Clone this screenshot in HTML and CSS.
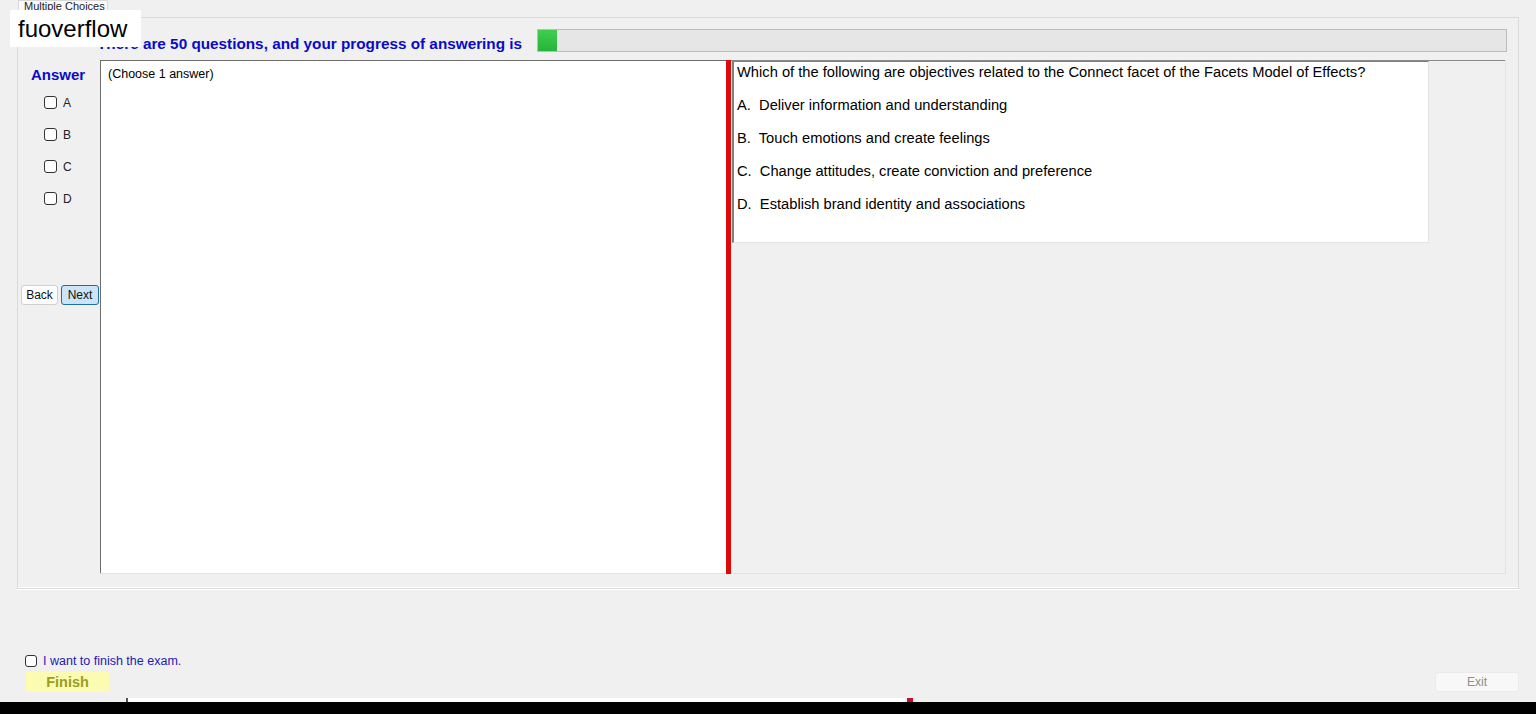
FILE: index.html
```html
<!DOCTYPE html>
<html lang="en">
	<head>
		<title>Multiple Choices</title>
		<link rel="stylesheet" href="styles.css">
	</head>
	<body>
		<div class="watermark">fuoverflow</div>

		<div class="tabs">
			<span class="tab">Multiple Choices</span>
		</div>

		<div class="page">
			<div class="head">
				<div class="title">There are 50 questions, and your progress of answering is</div>
				<div class="progress"><div class="progress_fill" style="width:19px"></div></div>
			</div>

			<div class="main">
				<div class="side">
					<div class="answer_label">Answer</div>
					<div class="opts">
						<label class="opt"><span class="box"></span>A</label>
						<label class="opt"><span class="box"></span>B</label>
						<label class="opt"><span class="box"></span>C</label>
						<label class="opt"><span class="box"></span>D</label>
					</div>
					<div class="nav">
						<button class="btn">Back</button>
						<button class="btn next">Next</button>
					</div>
				</div>

				<div class="split">
					<div class="pane_left">(Choose 1 answer)</div>
					<div class="splitter"></div>
					<div class="pane_right">
						<div class="question">
							<p>Which of the following are objectives related to the Connect facet of the Facets Model of Effects?</p>
							<p>A.  Deliver information and understanding</p>
							<p>B.  Touch emotions and create feelings</p>
							<p>C.  Change attitudes, create conviction and preference</p>
							<p>D.  Establish brand identity and associations</p>
						</div>
					</div>
				</div>
			</div>
		</div>

		<div class="footer">
			<label class="finish_check"><span class="box"></span>I want to finish the exam.</label>
			<div class="footer_btns">
				<button class="finish">Finish</button>
				<button class="exit">Exit</button>
			</div>
		</div>

		<div class="edge">
			<span class="edge_white"></span>
			<span class="edge_red"></span>
		</div>
		<div class="blackbar"></div>
	</body>
</html>
```

FILE: styles.css
```css
*{margin:0px;padding:0px;box-sizing:border-box;}
body{width:1536px;height:714px;overflow:hidden;background:#f0f0f0;font-family:"Liberation Sans",Arial,sans-serif;color:#000;position:relative;}

.watermark{position:absolute;left:10px;top:10px;width:131px;height:37px;background:#fff;font-size:24px;line-height:37px;padding-left:8px;color:#000;}

.tabs{height:17px;padding-left:18px;}
.tab{display:block;width:90px;height:17px;background:#fafafa;border:1px solid #d9d9d9;border-bottom:none;font-size:11px;line-height:10px;padding-left:5px;color:#222;overflow:hidden;}

.page{margin-left:17px;width:1502px;height:572px;border:1px solid #dadada;box-shadow:0 1px 0 #fff, inset 0 -1px 0 #fff;}

.head{height:42px;display:flex;align-items:flex-start;}
.title{width:440px;margin-left:79px;margin-top:17px;font-size:15.3px;font-weight:bold;color:#0a0ac8;line-height:17px;white-space:nowrap;}
.progress{flex:1;margin-right:11px;margin-top:11px;height:23px;background:#e6e6e6;border:1px solid #bcbcbc;}
.progress_fill{height:21px;background:linear-gradient(#3fcf4f,#26b33a);}

.main{height:514px;display:flex;}
.side{width:82px;}
.answer_label{padding-left:13px;padding-top:7px;font-size:15px;font-weight:bold;color:#0a0ac8;line-height:16px;}
.opts{display:flex;flex-direction:column;gap:19px;padding-top:13px;padding-left:26px;}
.opt{display:flex;align-items:center;height:13px;font-size:12px;color:#222;}
.box{display:inline-block;width:13px;height:13px;border:1px solid #333;border-radius:3px;background:#fff;margin-right:6px;}
.nav{margin-top:80px;padding-left:3px;display:flex;gap:3px;}
.btn{height:20px;width:37px;font-family:inherit;font-size:12px;background:#fdfdfd;border:1px solid #d0d0d0;border-radius:3px;color:#111;}
.btn.next{width:38px;background:#cce4f7;border:1px solid #1b6cb0;}

.split{flex:1;margin-right:12px;display:flex;border-bottom:1px solid #e2e2e2;border-right:1px solid #e2e2e2;}
.pane_left{width:626px;background:#fff;border-left:1px solid #6d6d6d;border-top:1px solid #6d6d6d;font-size:12.5px;padding-left:7px;padding-top:6px;line-height:14px;}
.splitter{width:5px;background:#dd0a0a;margin-bottom:-1px;}
.pane_right{flex:1;border-top:1px solid #8a8a8a;padding-left:1px;}
.question{width:697px;height:182px;background:#fff;border-left:2px solid #808080;border-top:1px solid #808080;border-right:1px solid #e3e3e3;border-bottom:1px solid #e3e3e3;padding-left:3px;padding-top:0px;font-size:14.7px;}
.question p{line-height:20px;margin-bottom:13px;white-space:pre;}

.footer{height:109px;padding-top:65px;padding-left:25px;}
.finish_check{display:flex;align-items:center;height:13px;font-size:12.5px;color:#1c1cb4;}
.finish_check .box{width:12px;height:12px;}
.footer_btns{display:flex;justify-content:space-between;margin-top:5px;padding-left:1px;margin-right:17px;}
.finish{width:83px;height:20px;background:#fbfbb2;border:none;font-family:inherit;font-weight:bold;font-size:14.5px;color:#9d9d1e;}
.exit{width:84px;height:20px;background:#f8f8f8;border:1px solid #ebebeb;border-radius:3px;font-family:inherit;font-size:12px;color:#8d8d8d;}

.edge{height:4px;display:flex;padding-left:126px;}
.edge_white{width:779px;background:#fff;border-left:2px solid #555;}
.edge_red{width:6px;margin-left:2px;background:#c0102a;}
.blackbar{height:12px;background:#000;}
```
